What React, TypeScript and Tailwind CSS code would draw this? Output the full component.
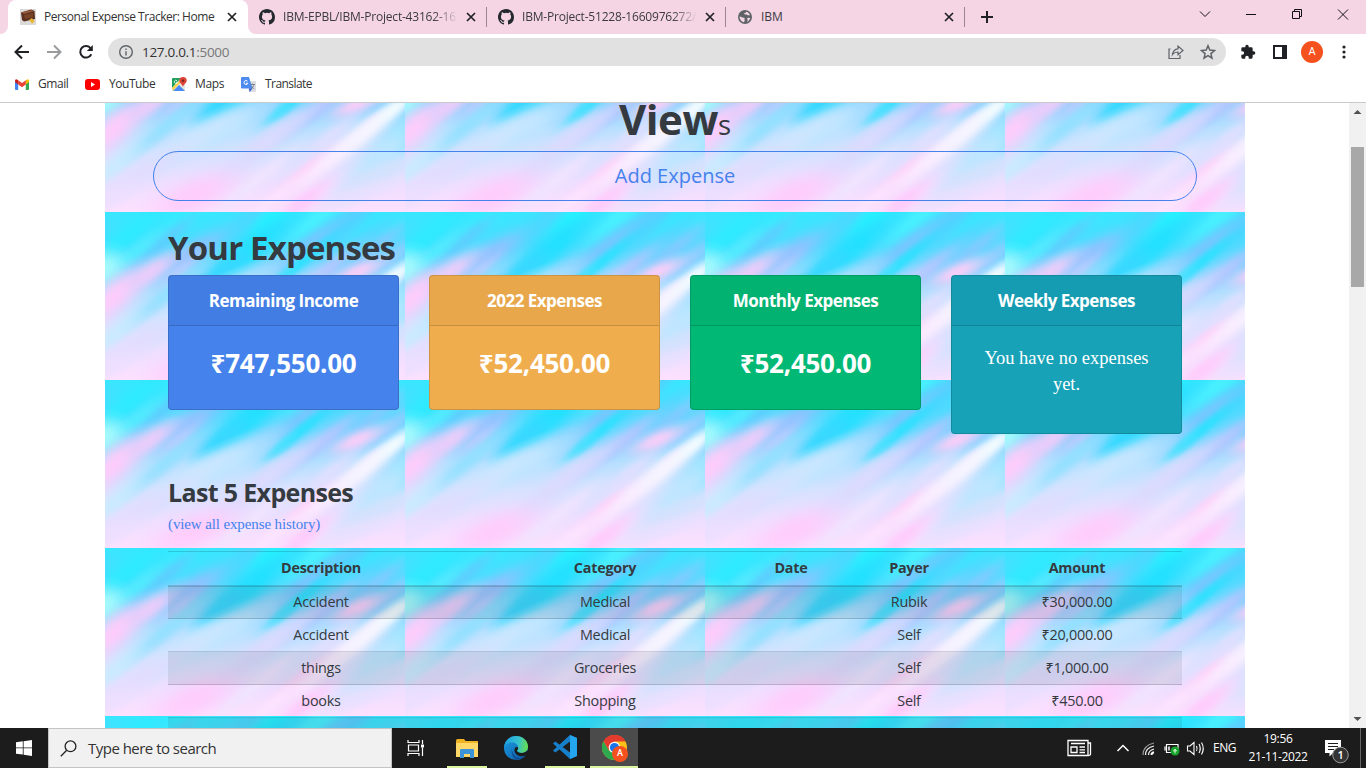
import React from 'react';

const UI = "font-['Open_Sans','Noto_Sans',sans-serif]";

function CloseX() {
  return (
    <svg width="10" height="10" viewBox="0 0 10 10" stroke="#1f2124" strokeWidth="1.7" className="shrink-0">
      <path d="M1 1l8 8M9 1l-8 8" />
    </svg>
  );
}

function GitHub() {
  return (
    <svg width="16" height="16" viewBox="0 0 16 16" fill="#24292f" className="shrink-0">
      <path d="M8 0C3.58 0 0 3.58 0 8c0 3.54 2.29 6.53 5.47 7.59.4.07.55-.17.55-.38 0-.19-.01-.82-.01-1.49-2.01.37-2.53-.49-2.69-.94-.09-.23-.48-.94-.82-1.13-.28-.15-.68-.52-.01-.53.63-.01 1.08.58 1.23.82.72 1.21 1.87.87 2.33.66.07-.52.28-.87.51-1.07-1.78-.2-3.64-.89-3.64-3.95 0-.87.31-1.59.82-2.15-.08-.2-.36-1.02.08-2.12 0 0 .67-.21 2.2.82a7.6 7.6 0 014 0c1.53-1.04 2.2-.82 2.2-.82.44 1.1.16 1.92.08 2.12.51.56.82 1.27.82 2.15 0 3.07-1.87 3.75-3.65 3.95.29.25.54.73.54 1.48 0 1.07-.01 1.93-.01 2.2 0 .21.15.46.55.38A8 8 0 0016 8c0-4.42-3.58-8-8-8z" />
    </svg>
  );
}

function Wallet() {
  return (
    <svg width="16" height="16" viewBox="0 0 16 16" className="shrink-0">
      <rect width="16" height="16" fill="#dcdad8" />
      <path d="M1 3.5L11 .5l3.5 1.500.5 8L4 12.500 2 11z" fill="#5b3020" />
      <path d="M1.500 3.500L11 1l2.500 1.500L4 5z" fill="#94583a" />
      <path d="M4 6l9-2v4L5 10z" fill="#784428" />
      <path d="M9 11l3-2 1 2 2 1-2 1.500-1 1.500-1-2z" fill="#e9b52c" />
    </svg>
  );
}

function Globe() {
  return (
    <svg width="14" height="14" viewBox="0 0 14 14" className="shrink-0">
      <circle cx="7" cy="7" r="7" fill="#5f6368" />
      <path d="M1.500 6.500c2 .3 2.500 1.200 4.300 1.200.8 0 1.200.8.7 1.600-.4.600.5 1 .2 1.600-.4.600-.7 1-1 1.400C3.300 11.600 1.600 9.400 1.500 6.500zM8.500 1.700c-.4 1-1.600 1-2.200 1.500-.6.600.2 1.400 1.200 1.200 1.200-.2 1.500.8 2.400.9 1 .1 1.700-.5 2.200.3C11.600 3.600 10.300 2.200 8.500 1.700zM9.500 8c1.300-.4 2 .3 2.700-.3-.2 1.700-1.300 3.200-2.900 4-.3-1 .6-1.400.300-2.200-.3-.6-.8-1.200-.1-1.500z" fill="#f5d5e4" />
    </svg>
  );
}

function Chrome({ size = 25 }: { size?: number }) {
  return (
    <svg width={size} height={size} viewBox="0 0 24 24">
      <circle cx="12" cy="12" r="12" fill="#fbc116" />
      <path d="M12 12L1.600 6A12 12 0 0122.400 6H12z" fill="#e33b2e" />
      <path d="M1.600 6A12 12 0 0012 24l5.200-9L12 12 6.800 15z" fill="#2da94f" />
      <path d="M1.600 6l5.200 9L12 6h10.400A12 12 0 001.600 6z" fill="#e33b2e" />
      <circle cx="12" cy="12" r="5.600" fill="#fff" />
      <circle cx="12" cy="12" r="4.400" fill="#1a73e8" />
    </svg>
  );
}

function TabStrip() {
  const title = 'ml-2 mr-[8px] w-[175px] whitespace-nowrap tracking-[-0.2px] [mask-image:linear-gradient(to_right,#000_86%,transparent)]';
  return (
    <div className="flex h-[34px] shrink-0 bg-[#f5d5e4] text-[12px] text-[#3a3a3f]">
      <svg width="8" height="34" className="shrink-0" fill="#fff"><path d="M8 26a8 8 0 01-8 8h8z" /></svg>
      <div className="flex w-60 items-center rounded-t-lg bg-white pl-3 text-[#333]">
        <Wallet />
        <span className="ml-2 w-[183px] whitespace-nowrap tracking-[-0.46px]">Personal Expense Tracker: Home</span>
        <CloseX />
      </div>
      <svg width="8" height="34" className="shrink-0" fill="#fff"><path d="M0 26a8 8 0 008 8H0z" /></svg>
      <div className="flex w-[231px] items-center pl-[3px]">
        <GitHub />
        <span className={title}>IBM-EPBL/IBM-Project-43162-16</span>
        <CloseX />
        <i className="ml-auto h-5 w-px bg-[#9c8791]" />
      </div>
      <div className="flex w-[239px] items-center pl-[11px]">
        <GitHub />
        <span className={title}>IBM-Project-51228-1660976272/</span>
        <CloseX />
        <i className="ml-auto h-5 w-px bg-[#9c8791]" />
      </div>
      <div className="flex w-[239px] items-center pl-3">
        <Globe />
        <span className="ml-[9px] mr-2 w-[175px]">IBM</span>
        <CloseX />
        <i className="ml-auto h-5 w-px bg-[#9c8791]" />
      </div>
      <div className="flex flex-1 items-center pl-4">
        <svg width="12" height="12" stroke="#1f2124" strokeWidth="2"><path d="M6 0v12M0 6h12" /></svg>
      </div>
      <svg width="184" height="28" viewBox="0 0 184 28" fill="none" stroke="#111" strokeWidth="1" className="shrink-0">
        <path d="M18 11.500l5 5 5-5" />
        <path d="M64 14.500h10" />
        <path d="M110.500 11.500h7v7h-7zM112.500 11.500v-2h7v7h-2" />
        <path d="M156 9.500l10 10M166 9.500l-10 10" />
      </svg>
    </div>
  );
}

function Toolbar() {
  return (
    <div className="flex h-9 shrink-0 items-center bg-white">
      <svg width="108" height="36" viewBox="0 0 108 36" fill="none" strokeWidth="2" className="shrink-0">
        <path d="M29 18H16M22 11.500L15.500 18l6.500 6.500" stroke="#1f2124" />
        <path d="M47 18h13M54 11.500l6.500 6.500-6.500 6.500" stroke="#9a9b9d" />
        <path d="M91.300 20.300a5.800 5.800 0 11-.6-6" stroke="#1f2124" />
        <path d="M92.800 11v6h-6z" fill="#1f2124" />
      </svg>
      <div className="flex h-7 w-[1118px] items-center rounded-full bg-[#e1e1e1] pl-[11px] pr-[9px]">
        <svg width="14" height="14" viewBox="0 0 14 14" fill="none" stroke="#5f6368" strokeWidth="1.400">
          <circle cx="7" cy="7" r="6.300" /><path d="M7 6.200v4.300M7 3.500v1.500" />
        </svg>
        <span className="ml-[9px] flex-1 text-[13.5px] tracking-[-0.3px] text-[#333]">127.0.0.1<span className="text-[#777]">:5000</span></span>
        <svg width="50" height="18" viewBox="0 0 50 18" fill="none" stroke="#5f6368" strokeWidth="1.200">
          <path d="M3.500 6H2v9.500h11V12" />
          <path d="M5.500 11.500C6 7.800 8 6 11 5.800V3l5 4.500-5 4.300V9c-2.500 0-4 .5-5.500 2.500z" />
          <path d="M41 2.800l1.800 4.300 4.700.4-3.600 3.100 1.100 4.600L41 12.700l-4 2.500 1.100-4.600-3.600-3.100 4.700-.4z" strokeWidth="1.500" />
        </svg>
      </div>
      <div className="flex flex-1 items-center">
        <svg width="16" height="16" viewBox="0 0 24 24" fill="#1f2124" className="ml-[14px]">
          <path d="M20.500 11H19V7a2 2 0 00-2-2h-4V3.500a2.500 2.500 0 00-5 0V5H4a2 2 0 00-2 2v3.800h1.500a2.700 2.700 0 010 5.400H2V20a2 2 0 002 2h3.800v-1.500a2.700 2.700 0 015.400 0V22H17a2 2 0 002-2v-4h1.500a2.500 2.500 0 000-5z" />
        </svg>
        <svg width="14" height="14" className="ml-[17px]"><path d="M0 0h14v14H0zM2 2v10h7V2z" fill="#1f2124" fillRule="evenodd" /></svg>
        <span className="ml-[14px] grid size-[22px] place-items-center rounded-full bg-[#f4511e] font-[Roboto,sans-serif] text-[11px] text-white">A</span>
        <svg width="4" height="14" className="ml-[19px]" fill="#1f2124"><circle cx="2" cy="2" r="1.600" /><circle cx="2" cy="7" r="1.600" /><circle cx="2" cy="12" r="1.600" /></svg>
      </div>
    </div>
  );
}

function Bookmarks() {
  return (
    <div className="flex h-8 shrink-0 items-center bg-white pb-1 pl-[15px] text-[12px] tracking-[-0.45px] text-[#333]">
      <svg width="14" height="11" viewBox="0 0 14 11" className="shrink-0">
        <path d="M0 1.500V10q0 1 1 1h2.200V4z" fill="#4285f4" />
        <path d="M14 1.500V10q0 1-1 1h-2.200V4z" fill="#34a853" />
        <path d="M10.800 5.500V1.200L12 .4q2-.6 2 1.400v1.300z" fill="#fbbc04" />
        <path d="M3.200 5.500V1.200L7 4l3.800-2.800v4.300L7 8.300z" fill="#ea4335" />
        <path d="M0 3.100V1.800Q0-.2 2 .4l1.200.8v4.300z" fill="#c5221f" />
      </svg>
      <span className="ml-[9px] w-[47px]">Gmail</span>
      <svg width="15" height="11" className="shrink-0"><rect width="15" height="11" rx="3" fill="#f00" /><path d="M6 3v5l4-2.500z" fill="#fff" /></svg>
      <span className="ml-[9px] w-[63px]">YouTube</span>
      <svg width="15" height="15" viewBox="0 0 15 15" className="shrink-0">
        <rect y="1" width="13" height="13" rx="1" fill="#e8e6e0" />
        <path d="M0 2q0-1 1-1h8L0 11z" fill="#1fa15d" />
        <path d="M1 14l6-6 6 6z" fill="#4a8af4" />
        <path d="M0 11l8-8 1.500 1.500L1 13.500z" fill="#fbd44b" />
        <path d="M11 0a3.700 3.700 0 00-3.700 3.700C7.300 6 10 6.500 11 10c1-3.500 3.700-4 3.700-6.300A3.700 3.700 0 0011 0z" fill="#dc4437" />
        <circle cx="11" cy="3.700" r="1.300" fill="#7a261f" />
        <path d="M5 3.800a1.600 1.600 0 10.400 1.500H4" stroke="#fff" strokeWidth=".8" fill="none" />
      </svg>
      <span className="ml-[8px] w-[46px] tracking-[-0.35px]">Maps</span>
      <svg width="15" height="15" viewBox="0 0 15 15" className="shrink-0">
        <path d="M6 4h8q1 0 1 1v9q0 1-1 1H8z" fill="#dcdde0" />
        <path d="M1 0h7l3.500 11.500H1q-1 0-1-1V1q0-1 1-1z" fill="#4d8bf0" />
        <path d="M8 11.500h3.500L8.600 15z" fill="#2a56c6" />
        <path d="M6.600 4.300a2 2 0 10.300 2H5" stroke="#fff" strokeWidth="1" fill="none" />
        <path d="M9.500 7.500h4.500M11.500 6.500v1M13 7.500c-.5 2-1.500 3-2.500 4M10.500 9c.8 1.500 1.500 2 2.800 2.800" stroke="#6d7680" strokeWidth=".8" fill="none" />
      </svg>
      <span className="ml-[9px] tracking-[-0.55px]">Translate</span>
    </div>
  );
}

// Each streak: centre x, centre y, half length, half thickness, colour, strength, tilt.
type Streak = [number, number, number, number, string, number, number?];

const streaks: Streak[] = [
  [25, 22, 85, 24, '#2eeaff', 1],
  [85, 4, 70, 18, '#2cf2ff', 1],
  [60, 28, 70, 14, '#5fcdff', 0.9],
  [28, 42, 60, 12, '#52ecff', 0.9],
  [145, 6, 80, 20, '#4cd8ff', 0.9],
  [170, 2, 50, 14, '#28f2ff', 1],
  [215, 4, 70, 16, '#48f0ff', 1],
  [86, 42, 58, 17, '#96c0ff', 0.9, -32],
  [145, 38, 85, 22, '#1ce2ff', 0.95],
  [120, 58, 50, 16, '#38d8ff', 1],
  [245, 8, 70, 16, '#56cfff', 0.9],
  [198, 38, 75, 15, '#78c6ff', 0.95],
  [290, 8, 60, 22, '#34eaff', 1],
  [262, 26, 60, 12, '#50d8ff', 0.9],
  [270, 36, 65, 14, '#88c8ff', 0.85],
  [160, 62, 40, 16, '#8ed4ff', 0.8],
  [198, 49, 70, 10, '#2ae2ff', 0.9],
  [178, 66, 30, 9, '#3ce0ff', 0.8],
  [220, 60, 66, 13, '#b2c6ff', 0.95],
  [288, 45, 50, 14, '#96ccff', 0.8],
  [0, 56, 32, 26, '#acfcfc', 0.9],
  [10, 84, 60, 24, '#ffccfb', 1, -44],
  [46, 60, 52, 17, '#eeccfa', 0.95, -36],
  [74, 60, 40, 10, '#c8ccfe', 0.7],
  [60, 84, 85, 13, '#92e0ff', 0.9],
  [8, 124, 60, 16, '#c8ecff', 0.8],
  [118, 84, 85, 22, '#c0e6ff', 1, -26],
  [80, 102, 90, 18, '#cde6ff', 0.95, -34],
  [185, 84, 60, 12, '#cdd6ff', 0.85],
  [40, 128, 80, 16, '#e0dcfe', 0.9, -30],
  [10, 152, 60, 16, '#ecdfff', 0.8, -30],
  [155, 102, 80, 16, '#dcdafe', 0.9],
  [88, 152, 70, 26, '#ffcbfb', 0.95, -24],
  [150, 138, 80, 11, '#f0e4ff', 0.95],
  [222, 96, 70, 14, '#e2dfff', 0.9],
  [252, 60, 46, 14, '#fccef8', 0.95, -24],
  [268, 78, 30, 10, '#ecdcfd', 0.8],
  [304, 90, 60, 24, '#84e6ff', 1],
  [275, 112, 70, 20, '#bfe6ff', 1],
  [272, 134, 80, 18, '#d2e2fd', 1, -26],
  [255, 150, 80, 14, '#eae0ff', 0.8, -20],
  [198, 132, 75, 14, '#fed4fb', 0.95],
  [205, 124, 26, 9, '#ffccf8', 0.7],
  [198, 158, 50, 15, '#ffcbfb', 0.95],
  [165, 158, 50, 10, '#fce6ff', 0.8],
  [225, 116, 85, 14, '#fae9ff', 1],
  [260, 88, 66, 16, '#f6f4ff', 1],
  [290, 64, 40, 12, '#f4fcff', 0.95],
];

function HoloBackdrop() {
  return (
    <svg className="absolute inset-0" width="1140" height="625">
      <defs>
        <linearGradient id="base" x1="0" y1="0" x2="0" y2="1">
          <stop offset="0" stopColor="#38e6ff" />
          <stop offset=".2" stopColor="#52daff" />
          <stop offset=".38" stopColor="#88d6ff" />
          <stop offset=".5" stopColor="#b8e0ff" />
          <stop offset=".65" stopColor="#d6e2ff" />
          <stop offset=".82" stopColor="#eddeff" />
          <stop offset="1" stopColor="#fde0ff" />
        </linearGradient>
        {streaks.map(([, , , , color], i) => (
          <radialGradient key={i} id={`streak${i}`}>
            <stop offset="0" stopColor={color} stopOpacity="1" />
            <stop offset=".25" stopColor={color} stopOpacity=".88" />
            <stop offset=".5" stopColor={color} stopOpacity=".52" />
            <stop offset=".75" stopColor={color} stopOpacity=".16" />
            <stop offset="1" stopColor={color} stopOpacity="0" />
          </radialGradient>
        ))}
        <pattern id="holo" x="0" y="-59" width="300" height="168" patternUnits="userSpaceOnUse">
          <rect width="300" height="168" fill="url(#base)" />
          {streaks.map(([x, y, rx, ry, , strength, tilt = -39], i) => (
            <ellipse key={i} rx={rx} ry={ry} fill={`url(#streak${i})`} opacity={strength} transform={`translate(${x} ${y}) rotate(${tilt})`} />
          ))}
        </pattern>
      </defs>
      <rect width="1140" height="625" fill="url(#holo)" />
    </svg>
  );
}

function Card({ title, color, children }: { title: string; color: string; children: React.ReactNode }) {
  return (
    <div className={`${color} w-[231px] rounded border border-black/15 text-center text-white`}>
      <div className="flex h-[50px] items-center justify-center border-b border-black/15 bg-black/[0.03] text-[17px] font-bold tracking-[-0.52px]">{title}</div>
      {children}
    </div>
  );
}

const rows = [
  ['Accident', 'Medical', '', 'Rubik', '₹30,000.00'],
  ['Accident', 'Medical', '', 'Self', '₹20,000.00'],
  ['things', 'Groceries', '', 'Self', '₹1,000.00'],
  ['books', 'Shopping', '', 'Self', '₹450.00'],
  ['', '', '', '', ''],
];

function Page() {
  const amount = 'flex h-[74px] items-center justify-center text-[26px] font-bold tracking-[-0.25px]';
  return (
    <div className="flex h-[625px] shrink-0 overflow-hidden bg-white text-[#343a40]">
      <div className="relative ml-[105px] w-[1140px] overflow-hidden">
        <HoloBackdrop />
        <div className="relative px-12">
          <div className="flex h-12 items-baseline justify-center leading-[32px]">
            <span className="text-[42px] font-bold tracking-[-0.5px]">View</span><span className="text-[27.500px]">s</span>
          </div>
          <div className="flex h-[50px] items-center justify-center rounded-full border border-[#4582ec] text-[20px] text-[#4582ec]">Add Expense</div>
          <div className="px-[15px]">
            <h2 className="mt-[24px] h-[52px] text-[33px] font-bold leading-[46px] tracking-[-0.85px]">Your Expenses</h2>
            <div className="-mt-[2px] flex h-[159px] items-start justify-between">
              <Card title="Remaining Income" color="bg-[#4582ec]"><div className="h-[83px]"><div className={amount}>₹747,550.00</div></div></Card>
              <Card title="2022 Expenses" color="bg-[#f0ad4e]"><div className="h-[83px]"><div className={amount}>₹52,450.00</div></div></Card>
              <Card title="Monthly Expenses" color="bg-[#02b875]"><div className="h-[83px]"><div className={amount}>₹52,450.00</div></div></Card>
              <Card title="Weekly Expenses" color="bg-[#17a2b8]">
                <div className="h-[107px] px-5 pt-[19px] font-['Liberation_Serif',serif] text-[18.500px] leading-[26px]">You have no expenses yet.</div>
              </Card>
            </div>
            <h4 className="mt-[42px] h-8 text-[25px] font-bold leading-8 tracking-[-0.65px]">Last 5 Expenses</h4>
            <div className="mt-[6px] h-[37px] font-['Liberation_Serif',serif] text-[15px] leading-5 tracking-[-0.12px] text-[#4582ec]">(view all expense history)</div>
            <table className="w-[1014px] table-fixed border-collapse text-center text-[14.400px] tracking-[-0.25px]">
              <colgroup>
                <col className="w-[306px]" /><col className="w-[262px]" /><col className="w-[110px]" /><col className="w-[126px]" /><col className="w-[210px]" />
              </colgroup>
              <thead>
                <tr className="h-[34px] border-t border-b-2 border-black/15">
                  {['Description', 'Category', 'Date', 'Payer', 'Amount'].map((h) => <th key={h} className="p-0 font-bold">{h}</th>)}
                </tr>
              </thead>
              <tbody>
                {rows.map((r, i) => (
                  <tr key={i} className="h-[33px] border-b border-black/15 odd:bg-[#343a40]/10">
                    {r.map((c, j) => <td key={j} className="p-0">{c}</td>)}
                  </tr>
                ))}
              </tbody>
            </table>
          </div>
        </div>
      </div>
      <div className="ml-auto flex w-[17px] flex-col items-center bg-[#f1f1f1]">
        <svg width="9" height="44" fill="#505050"><path d="M0.500 11h8L4.500 7z" /></svg>
        <div className="h-[140px] w-[13px] bg-[#a8a8a8]" />
        <svg width="9" height="5" fill="#505050" className="mb-[6px] mt-auto"><path d="M0.500 0h8L4.500 4z" /></svg>
      </div>
    </div>
  );
}

function Taskbar() {
  return (
    <div className="flex h-10 shrink-0 bg-[#1c1c1c] text-white">
      <div className="grid w-12 place-items-center">
        <svg width="16" height="16" fill="#fff"><path d="M0 2.200l6.800-.9v6.200H0zM7.600 1.200L16 0v7.500H7.600zM0 8.300h6.800v6.300L0 13.700zM7.600 8.300H16V16l-8.400-1.200z" /></svg>
      </div>
      <div className="flex w-[344px] items-center border border-[#c4c4c4] bg-[#f1f1f1] pl-[11px] text-[15px] tracking-[-0.52px] text-[#333]">
        <svg width="17" height="17" fill="none" stroke="#222" strokeWidth="1.300"><circle cx="10.500" cy="6.300" r="5.400" /><path d="M6.700 10.300L.8 16.200" /></svg>
        <span className="ml-[11px]">Type here to search</span>
      </div>
      <div className="grid w-[55px] place-items-center pr-[7px]">
        <svg width="18" height="16" fill="none" stroke="#fff" strokeWidth="1.200"><path d="M1 0v2.500h11V0M1.500 5h10v6h-10zM1 16v-2.500h11V16M15.500 0v4M15.500 7.500V16" /><path d="M14 4.500h3v3h-3z" fill="#fff" stroke="none" /></svg>
      </div>
      <div className="grid w-10 place-items-center border-b-2 border-[#dcf5a2] pt-[2px]">
        <svg width="22" height="19" viewBox="0 0 22 19"><path d="M0 2q0-2 1.500-2H8l1.500 2H22v16H0z" fill="#f0b323" /><path d="M0 4h22v14H0z" fill="#ffd867" /><path d="M4 19v-8q0-1 1-1h12q1 0 1 1v8h-4v-4H8v4z" fill="#3c93d8" /></svg>
      </div>
      <div className="grid w-[58px] place-items-center">
        <svg width="24" height="24" viewBox="0 0 24 24">
          <defs>
            <linearGradient id="edgeA" x1="0" y1=".2" x2="1" y2=".3"><stop offset="0" stopColor="#1c9fe0" /><stop offset=".6" stopColor="#35c1d0" /><stop offset="1" stopColor="#66de4e" /></linearGradient>
            <linearGradient id="edgeB" x1="0" y1="0" x2="1" y2="1"><stop offset="0" stopColor="#1b9de2" /><stop offset="1" stopColor="#0c59a4" /></linearGradient>
          </defs>
          <circle cx="12" cy="12" r="12" fill="url(#edgeB)" />
          <path d="M0 11.500C.7 5 5.500 0 12 0c7 0 12 5 12 10.500 0 4-3 6.500-6.500 6.500-2.500 0-4.500-1-4.500-2.200 0-.8 1.200-1.200 1.200-3C14.200 8.500 11 6.500 8 6.500 4 6.500 1 9 0 11.500z" fill="url(#edgeA)" />
          <path d="M13 14.800c0 1.200 2 2.200 4.500 2.200 2 0 4-.7 5.500-2.200l1 .7V18l-2.300 1.500c-1.500.6-3 1-5 .8-4.200-.6-7.700-4.300-5.700-8.300 1-1.500 3.500-1 3.200.2 0 1.300-1.200 1.800-1.200 2.600z" fill="#1c1c1c" />
          <path d="M7.800 13c.2 5 4 9 8.700 8.600 2-.1 3.800-1 5.200-2.300C19.500 22.500 16 24 12.500 24 9 22 7 17.500 7.800 13z" fill="#114f95" />
        </svg>
      </div>
      <div className="grid w-10 place-items-center border-b-2 border-[#dcf5a2]">
        <svg width="24" height="24" viewBox="0 0 24 24"><path d="M17 0l7 3v18l-7 3L0 8.500l2.300-2L18 18.300V5.700L2.300 17.500 0 15.500z" fill="#1680cb" /><path d="M17 0l7 3v18l-7 3z" fill="#25a5ee" /></svg>
      </div>
      <div className="relative ml-[5px] grid w-12 place-items-center border-b-2 border-[#dcf5a2] bg-[#4b4b4b]">
        <Chrome />
        <span className="absolute left-[22px] top-[18px] grid size-4 place-items-center rounded-full bg-[#f4511e] font-[Roboto,sans-serif] text-[9px] font-medium">A</span>
      </div>
      <div className="ml-auto flex items-center">
        <svg width="146" height="40" viewBox="0 0 146 40" fill="none" stroke="#fff" strokeWidth="1.200">
          <path d="M1 12.500h20v15H1zM21 15h2.500v11q0 1.500-2.500 1.500M4 15.500h14M4 19h6v5.500H4zM12.500 19H18M12.500 21.800H18M12.500 24.500H18" strokeWidth="1.300" />
          <path d="M50.500 23l5.500-5.500 5.500 5.500" strokeWidth="1.500" />
          <path d="M76 27c0-6 4-10.500 11-12" stroke="#999" /><path d="M78.500 27c0-5 3.500-8 8.500-9M81.500 27c0-3.500 2-5 5.500-6" stroke="#eee" /><path d="M84.500 27c0-1.800 1-2.500 2.500-2.800" strokeWidth="2" />
          <path d="M99.500 16.500h11.500v8H99.500zM98 18.500v4" /><path d="M102 18.500v4" strokeWidth="1.500" />
          <circle cx="108" cy="23" r="4.500" fill="#16a22b" stroke="none" /><path d="M108 25.500v-3M106.500 23l1.500-2 1.500 2z" stroke="#dfffe0" strokeWidth=".9" />
          <path d="M120.500 18h2.500l4-3.500v12l-4-3.500h-2.500zM129.500 18q1.200 2.500 0 5M132 16q2.500 4.500 0 9M134.500 14.500q3.500 6 0 12" strokeWidth="1.100" />
        </svg>
        <span className="w-[35px] text-[12px] tracking-[-0.5px]">ENG</span>
        <div className="w-[60px] text-center text-[12px] leading-[18px] tracking-[-0.35px]"><div>19:56</div><div>21-11-2022</div></div>
        <svg width="30" height="40" className="ml-[16px]"><path d="M1 12h16v13h-8l-3.500 3.500V25H1z" fill="#fff" /><path d="M4 15.500h10M4 18.500h10M4 21.500h6" stroke="#1c1c1c" /><circle cx="16.500" cy="27" r="7.800" fill="#343434" stroke="#9a9a9a" /><text x="13.600" y="31" fill="#fff" className="text-[11px] font-semibold">1</text></svg>
        <i className="ml-[6px] mr-[5px] h-10 w-px bg-[#666]" />
      </div>
    </div>
  );
}

export default function App() {
  return (
    <div className={`${UI} flex h-[768px] w-[1366px] flex-col overflow-hidden bg-white`}>
      <TabStrip />
      <Toolbar />
      <Bookmarks />
      <div className="h-px shrink-0 bg-[#c9cacc]" />
      <Page />
      <Taskbar />
    </div>
  );
}
